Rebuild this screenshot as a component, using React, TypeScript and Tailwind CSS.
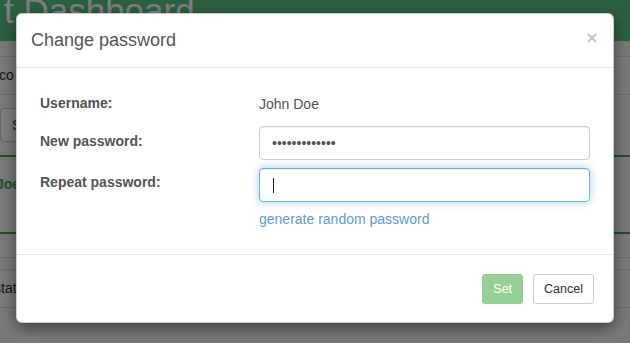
import { X } from 'lucide-react';

const font = { fontFamily: '"Liberation Sans", Arial, sans-serif' };

function Backdrop() {
  return (
    <div className="flex flex-col">
      <div className="h-[41px] overflow-hidden bg-[#56c281]">
        <h1 className="ml-[4px] -mt-[7px] text-[35px] leading-none text-white whitespace-nowrap">
          t Dashboard
        </h1>
      </div>
      <div className="h-[16px] border-b border-[#dcdcdc]" />
      <div className="flex h-[38px] items-center border-b border-[#dcdcdc] text-[14px] text-[#333]">
        <span className="-ml-[1px]">co</span>
      </div>
      <div className="flex h-[60px] items-center">
        <div className="flex h-[34px] w-[80px] items-center rounded border border-[#ccc] bg-white pl-[11px] text-[14px] text-[#333]">
          S
        </div>
      </div>
      <div className="flex h-[79px] items-start border-y-2 border-[#3aa655] pt-[17px]">
        <span className="-ml-[4px] text-[14px] font-bold text-[#3aa655]">Joe</span>
      </div>
      <div className="h-[24px] border-b border-[#dcdcdc]" />
      <div className="h-[12px] border-b border-[#dcdcdc]" />
      <div className="flex h-[38px] items-center border-b border-[#dcdcdc] text-[14px] text-[#333]">
        <span className="-ml-[6px]">stat</span>
      </div>
    </div>
  );
}

function Modal() {
  return (
    <div className="w-[598px] rounded-[6px] border border-black/20 bg-white shadow-[0_5px_15px_rgba(0,0,0,0.5)] text-[#555]">
      <div className="flex h-[54px] items-center justify-between border-b border-[#e5e5e5] px-[14px]">
        <h4 className="text-[18px] leading-[25px] text-[#555]">Change password</h4>
        <button className="-mt-[6px] text-[#c8c8c8]">
          <X size={14} strokeWidth={3.6} />
        </button>
      </div>

      <div className="flex flex-col px-[23px] pt-[25px] pb-[25px] text-[14px]">
        <div className="grid grid-cols-[219px_331px] leading-[20px]">
          <label className="font-bold">Username:</label>
          <span className="pt-px">John Doe</span>
        </div>

        <div className="mt-[12px] grid grid-cols-[219px_331px]">
          <label className="pt-[5px] font-bold leading-[20px]">New password:</label>
          <input
            type="password"
            readOnly
            defaultValue="abcdefghijklm"
            className="h-[34px] rounded border border-[#ccc] px-[12px] text-[14px] text-[#555] shadow-[inset_0_1px_1px_rgba(0,0,0,0.075)] outline-none"
            style={font}
          />
        </div>

        <div className="mt-[8px] grid grid-cols-[219px_331px]">
          <label className="pt-[4px] font-bold leading-[20px]">Repeat password:</label>
          <div className="flex h-[34px] items-center rounded border border-[#66afe9] px-[13px] shadow-[inset_0_1px_1px_rgba(0,0,0,0.075),0_0_8px_rgba(102,175,233,0.6)]">
            <span className="h-[15px] w-px bg-[#222]" />
          </div>
        </div>

        <div className="mt-[7px] grid grid-cols-[219px_331px] leading-[20px]">
          <span />
          <a className="text-[#5a9be6]">generate random password</a>
        </div>
      </div>

      <div className="flex justify-end gap-[10px] border-t border-[#e5e5e5] pt-[19px] pr-[19px] pb-[18px]">
        <button className="h-[30px] rounded-[3px] border border-[#8fce8f] bg-[#95d195] px-[10px] text-[12.5px] text-white">
          Set
        </button>
        <button className="h-[30px] rounded-[3px] border border-[#ccc] bg-white px-[10px] text-[12.5px] text-[#333]">
          Cancel
        </button>
      </div>
    </div>
  );
}

export default function App() {
  return (
    <div className="relative h-[343px] w-[630px] overflow-hidden bg-[#f4f4f4]" style={font}>
      <Backdrop />
      <div className="absolute inset-0 bg-black/50 pl-[16px] pt-[13px]">
        <Modal />
      </div>
    </div>
  );
}
